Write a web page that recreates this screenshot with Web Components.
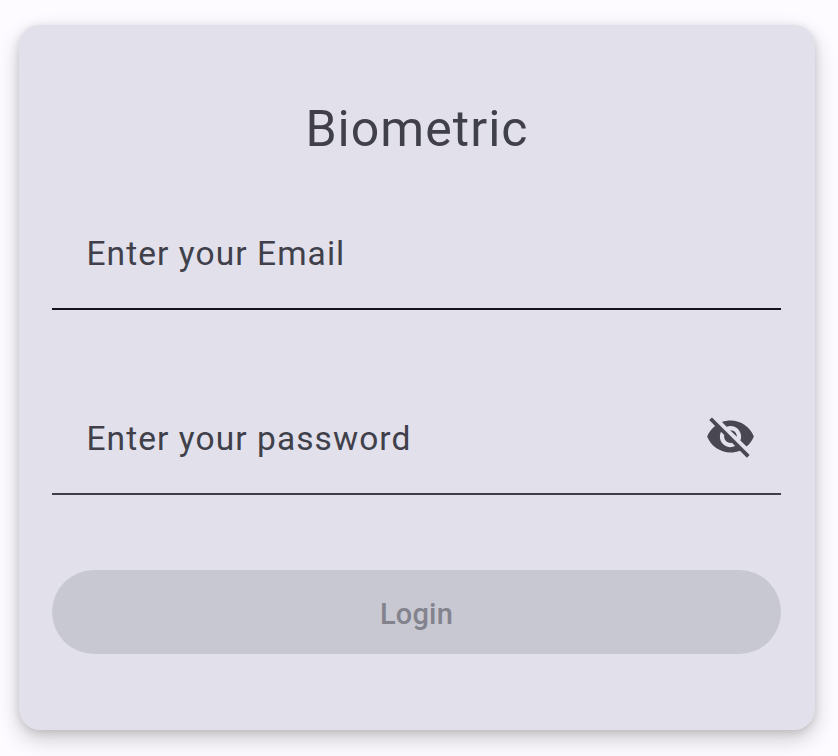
<!DOCTYPE html>
<html lang="en"><head><meta charset="utf-8"><title>Biometric</title>
<style>body{margin:0;height:756px;overflow:hidden;background:#fdfbff;font-family:Roboto,sans-serif;color:#40404b}</style></head><body>
<login-card heading="Biometric">
<text-field label="Enter your Email" active></text-field>
<text-field label="Enter your password"><eye-off-icon></eye-off-icon></text-field>
<pill-button>Login</pill-button>
</login-card>
<script>
class Base extends HTMLElement{connectedCallback(){if(!this.shadowRoot)this.attachShadow({mode:'open'}).innerHTML=this.view()}}
customElements.define('login-card',class extends Base{view(){return `<style>
:host{display:flex;flex-direction:column;box-sizing:border-box;width:796px;height:705px;margin:25px 0 0 19px;padding:72px 34px 0 33px;border-radius:21px;background:#e2e0ea;box-shadow:0 9px 22px rgba(0,0,0,.2),0 2px 9px rgba(0,0,0,.12)}
h1{margin:0;height:64px;line-height:64px;padding-left:1px;font-size:50px;font-weight:400;letter-spacing:1.04px;text-align:center;white-space:nowrap}
</style><h1>${this.getAttribute('heading')}</h1><slot></slot>`}});
customElements.define('text-field',class extends Base{view(){return `<style>
:host{display:flex;align-items:center;justify-content:space-between;box-sizing:border-box;height:114px;margin-top:35px;padding:0 25px 0 34.5px;border-bottom:2px solid #3e3d49}
:host([active]){border-color:#14131c}
:host(:not([active])){margin-top:71px}
span{font-size:33.5px;line-height:44px;letter-spacing:1.07px;padding-top:3px;white-space:nowrap}
::slotted(eye-off-icon){margin-top:-2px}
</style><span>${this.getAttribute('label')}</span><slot></slot>`}});
customElements.define('eye-off-icon',class extends Base{view(){return `<style>:host{display:block;width:51px;height:51px}svg{display:block}</style>
<svg width="51" height="51" viewBox="0 0 24 24" fill="#484752"><path d="M12 7c2.76 0 5 2.24 5 5 0 .65-.13 1.26-.36 1.83l2.92 2.92c1.51-1.26 2.7-2.89 3.43-4.75-1.73-4.39-6-7.5-11-7.5-1.4 0-2.74.25-3.98.7l2.16 2.16C10.74 7.13 11.35 7 12 7zM2 4.27l2.28 2.28.46.46C3.08 8.3 1.78 10.02 1 12c1.73 4.39 6 7.5 11 7.5 1.55 0 3.03-.3 4.38-.84l.42.42L19.73 22 21 20.73 3.27 3 2 4.27zM7.53 9.8l1.55 1.55c-.05.21-.08.43-.08.65 0 1.66 1.34 3 3 3 .22 0 .44-.03.65-.08l1.55 1.55c-.67.33-1.41.53-2.2.53-2.76 0-5-2.24-5-5 0-.79.2-1.53.53-2.2zm4.31-.78l3.15 3.15.02-.16c0-1.66-1.34-3-3-3l-.17.01z"/></svg>`}});
customElements.define('pill-button',class extends Base{view(){return `<style>:host{display:block;margin-top:75px}button{display:block;width:100%;height:84px;padding:3px 0 0;border:0;border-radius:42px;background:#c8c8d2;color:#83838d;font:500 29px Roboto,sans-serif;letter-spacing:.2px}</style><button disabled><slot></slot></button>`}});
</script></body></html>
